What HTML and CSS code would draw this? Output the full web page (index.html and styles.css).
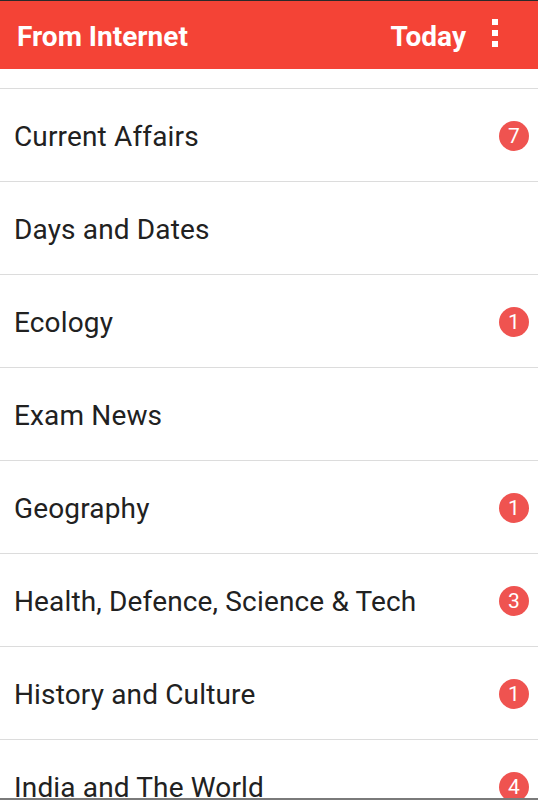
FILE: index.html
```html
<!DOCTYPE html>
<html>
<head>
<meta charset="utf-8">
<link rel="stylesheet" href="styles.css">
</head>
<body>
<div class="topline"></div>
<header class="appbar">
  <div class="title">From Internet</div>
  <div class="actions">
    <span class="today">Today</span>
    <span class="overflow"><i></i><i></i><i></i></span>
  </div>
</header>
<ul class="list">
  <li class="row partial"></li>
  <li class="row"><span class="label">Current Affairs</span><span class="badge">7</span></li>
  <li class="row"><span class="label">Days and Dates</span></li>
  <li class="row"><span class="label">Ecology</span><span class="badge">1</span></li>
  <li class="row"><span class="label">Exam News</span></li>
  <li class="row"><span class="label">Geography</span><span class="badge">1</span></li>
  <li class="row"><span class="label">Health, Defence, Science &amp; Tech</span><span class="badge">3</span></li>
  <li class="row"><span class="label">History and Culture</span><span class="badge">1</span></li>
  <li class="row"><span class="label">India and The World</span><span class="badge">4</span></li>
</ul>
<div class="bottomline"></div>
</body>
</html>
```
FILE: styles.css
```css
html, body {
  margin: 0;
  padding: 0;
  background: #ffffff;
  overflow: hidden;
  height: 800px;
}
body {
  font-family: Roboto, "Liberation Sans", sans-serif;
}
.topline {
  height: 1px;
  background: #2a2a2a;
}
.appbar {
  height: 68px;
  background: #f44336;
  display: flex;
  align-items: center;
  justify-content: space-between;
  padding: 0 0 0 17px;
  color: #fff;
  font-weight: 700;
  font-size: 28px;
}
.title {
  margin-top: 2px;
}
.actions {
  display: flex;
  align-items: center;
}
.today {
  margin-top: 2px;
}
.overflow {
  display: flex;
  flex-direction: column;
  gap: 5px;
  width: 6px;
  margin: -4px 40px 0 26px;
}
.overflow i {
  display: block;
  width: 6px;
  height: 6px;
  background: #fff;
}
.list {
  list-style: none;
  margin: 0;
  padding: 0;
}
.row {
  height: 92px;
  border-bottom: 1px solid #dcdcdc;
  display: flex;
  align-items: center;
  justify-content: space-between;
  padding: 0 9px 0 14px;
  font-size: 28px;
  letter-spacing: 0.15px;
  color: #212121;
}
.row.partial {
  height: 19px;
}
.label {
  margin-top: 2px;
}
.badge {
  width: 30px;
  height: 30px;
  border-radius: 50%;
  background: #ef5350;
  color: #fff;
  font-size: 21px;
  letter-spacing: 0;
  display: flex;
  align-items: center;
  justify-content: center;
  margin-top: 2px;
}
.bottomline {
  position: fixed;
  left: 0;
  right: 0;
  bottom: 0;
  height: 2px;
  background: #7a7a7a;
}
```
